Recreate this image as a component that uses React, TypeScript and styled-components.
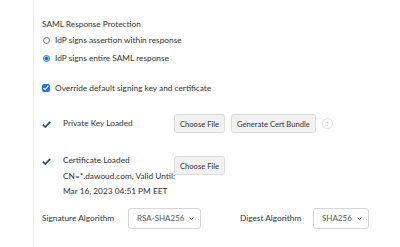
import { createGlobalStyle } from 'styled-components';
import styled from 'styled-components';

const GlobalStyle = createGlobalStyle`
  body {
    margin: 0;
    background: #ffffff;
    font-family: Lato, "Open Sans", sans-serif;
    color: #333333;
  }
`;

const Panel = styled.div`
  margin-left: 33px;
  border-left: 1px solid #ececec;
  height: 247px;
  padding: 18px 0 0 8px;
  box-sizing: border-box;
  font-size: 8.3px;
`;

const SectionTitle = styled.div`
  height: 12px;
  line-height: 12px;
  margin-bottom: 1px;
`;

const OptionRow = styled.label<{ $gap?: number }>`
  display: flex;
  align-items: center;
  gap: 5px;
  height: 18px;
  margin-top: ${({ $gap }) => $gap ?? 0}px;
  cursor: pointer;
`;

const Radio = styled.input`
  width: 7px;
  height: 7px;
  margin: 0 0 0 1px;
  accent-color: #1a73e8;
`;

const Checkbox = styled.input`
  width: 8px;
  height: 8px;
  margin: 0;
  accent-color: #1a73e8;
`;

const KeyRow = styled.div<{ $top: number }>`
  display: grid;
  grid-template-columns: 21px 111px auto;
  align-items: start;
  margin-top: ${({ $top }) => $top}px;
`;

const CheckMark = styled.div<{ $pad: number }>`
  padding-top: ${({ $pad }) => $pad}px;
`;

const LabelBlock = styled.div<{ $pad: number }>`
  display: flex;
  flex-direction: column;
  line-height: 15.5px;
  white-space: nowrap;
  padding-top: ${({ $pad }) => $pad}px;
`;

const Actions = styled.div<{ $pad: number }>`
  display: flex;
  align-items: center;
  gap: 6px;
  padding-top: ${({ $pad }) => $pad}px;
`;

const Button = styled.button`
  height: 19px;
  padding: 0 5px;
  background: #f1f1f1;
  border: 1px solid #dcdcdc;
  border-radius: 3px;
  font-family: Lato, sans-serif;
  font-size: 7.6px;
  color: #333;
  cursor: pointer;
`;

const Help = styled.span`
  display: inline-flex;
  align-items: center;
  justify-content: center;
  width: 9px;
  height: 9px;
  border: 1px solid #e2e2e2;
  border-radius: 50%;
  font-size: 6px;
  color: #aaa;
`;

const AlgoRow = styled.div`
  display: flex;
  align-items: center;
  margin-top: 8px;
`;

const AlgoLabel = styled.span<{ $width: number }>`
  width: ${({ $width }) => $width}px;
`;

const SelectWrap = styled.span<{ $width: number }>`
  position: relative;
  display: inline-block;
  width: ${({ $width }) => $width}px;
  height: 21px;
`;

const Select = styled.select`
  appearance: none;
  width: 100%;
  height: 100%;
  border: 1px solid #d6d6d6;
  border-radius: 3px;
  background: #fff;
  font-family: Lato, sans-serif;
  font-size: 8px;
  color: #555;
  padding: 0 12px 0 8px;
`;

const Chevron = styled.svg`
  position: absolute;
  right: 7px;
  top: 9px;
  pointer-events: none;
`;

function Tick() {
  return (
    <svg width="9" height="7" viewBox="0 0 9 7">
      <path d="M0.8 3.6 L3.3 6 L8.2 0.8" fill="none" stroke="#1f4e79" strokeWidth="1.7" />
    </svg>
  );
}

function Dropdown({ width, options }: { width: number; options: string[] }) {
  return (
    <SelectWrap $width={width}>
      <Select defaultValue={options[0]}>
        {options.map((o) => (
          <option key={o}>{o}</option>
        ))}
      </Select>
      <Chevron width="5" height="3" viewBox="0 0 5 3">
        <path d="M0.5 0.5 L2.5 2.5 L4.5 0.5" fill="none" stroke="#666" strokeWidth="0.9" />
      </Chevron>
    </SelectWrap>
  );
}

export default function App() {
  return (
    <>
      <GlobalStyle />
      <Panel>
        <SectionTitle>SAML Response Protection</SectionTitle>
        <OptionRow>
          <Radio type="radio" name="sign" />
          IdP signs assertion within response
        </OptionRow>
        <OptionRow>
          <Radio type="radio" name="sign" defaultChecked />
          IdP signs entire SAML response
        </OptionRow>
        <OptionRow $gap={12}>
          <Checkbox type="checkbox" defaultChecked />
          Override default signing key and certificate
        </OptionRow>

        <KeyRow $top={17}>
          <CheckMark $pad={6}>
            <Tick />
          </CheckMark>
          <LabelBlock $pad={2}>
            <span>Private Key Loaded</span>
          </LabelBlock>
          <Actions $pad={0}>
            <Button>Choose File</Button>
            <Button>Generate Cert Bundle</Button>
            <Help>?</Help>
          </Actions>
        </KeyRow>

        <KeyRow $top={20}>
          <CheckMark $pad={4}>
            <Tick />
          </CheckMark>
          <LabelBlock $pad={0}>
            <span>Certificate Loaded</span>
            <span>CN=*.dawoud.com, Valid Until:</span>
            <span>Mar 16, 2023 04:51 PM EET</span>
          </LabelBlock>
          <Actions $pad={3}>
            <Button>Choose File</Button>
          </Actions>
        </KeyRow>

        <AlgoRow>
          <AlgoLabel $width={86}>Signature Algorithm</AlgoLabel>
          <Dropdown width={73} options={['RSA-SHA256', 'RSA-SHA1']} />
          <AlgoLabel $width={39} />
          <AlgoLabel $width={73}>Digest Algorithm</AlgoLabel>
          <Dropdown width={56} options={['SHA256', 'SHA1']} />
        </AlgoRow>
      </Panel>
    </>
  );
}
